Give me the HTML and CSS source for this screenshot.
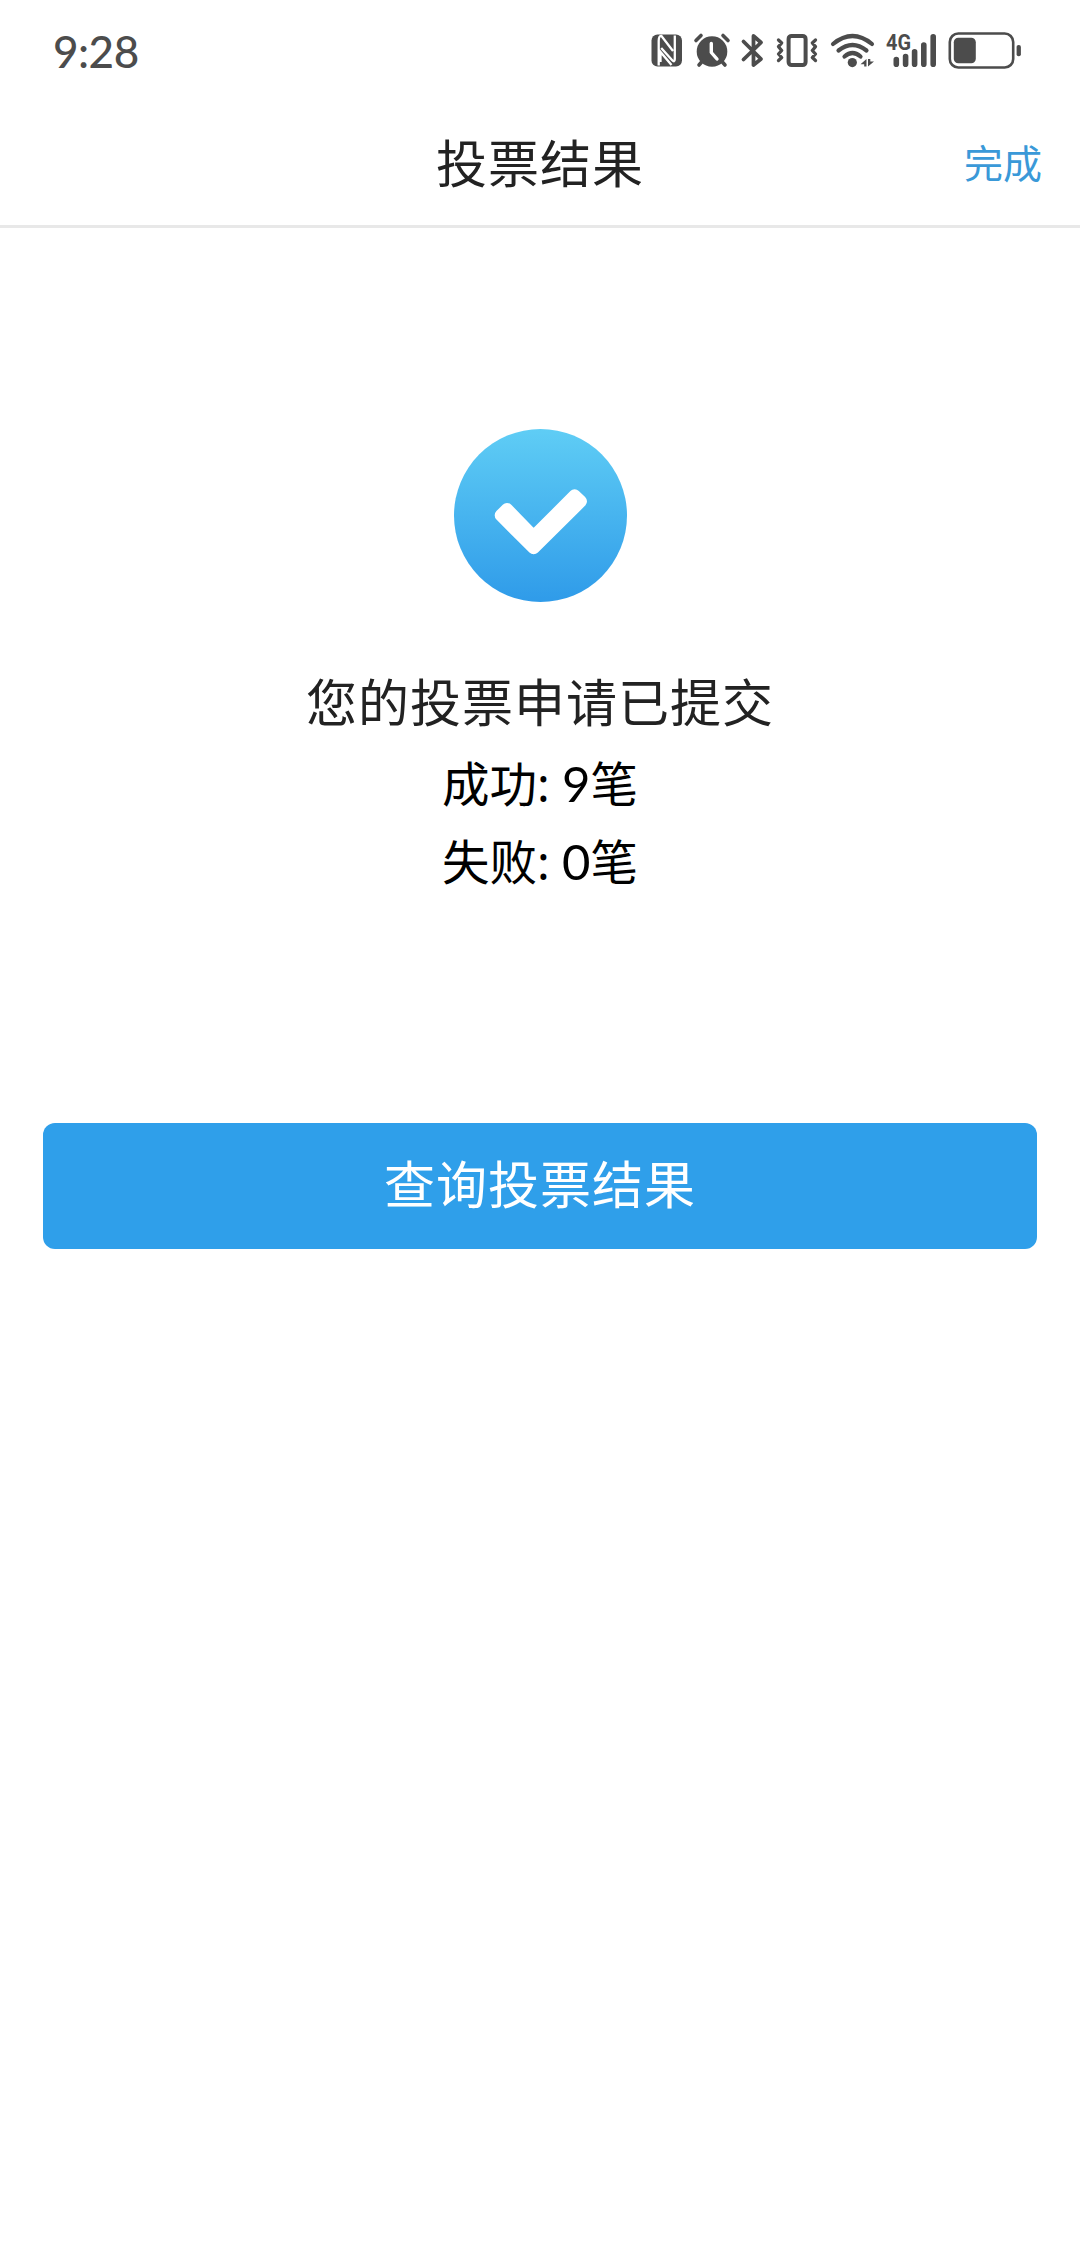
FILE: index.html
```
<!DOCTYPE html>
<html lang="zh-CN">
<head>
<meta charset="UTF-8">
<title>投票结果</title>
<meta name="viewport" content="width=device-width,initial-scale=1">
<link rel="stylesheet" href="styles.css">
</head>
<body>

<!-- Status bar -->
<div class="status-bar">
  <div class="time">9:28</div>
  <div class="status-icons">
    <!-- nfc -->
    <svg class="nfc" width="32" height="44" viewBox="0 0 32 44">
      <rect x="0.5" y="6.5" width="30.5" height="32" rx="6" fill="#4c4c4c"/>
      <path d="M7.7 37.5V13Q7.7 7.5 10.5 8L22 23M10.2 20L21 32Q23.8 35 23.8 31V7.5M9.5 34V24L20.5 37" fill="none" stroke="#fff" stroke-width="2.3"/>
    </svg>
    <!-- alarm -->
    <svg class="alarm" width="36" height="44" viewBox="0 0 36 44">
      <circle cx="18" cy="23.5" r="15.3" fill="#4c4c4c"/>
      <g fill="none" stroke="#4c4c4c" stroke-width="3.6" stroke-linecap="round">
        <path d="M2 12.5L7 7.5M34 12.5L29 7.5M8.5 33L5 37M27.5 33L31 37"/>
      </g>
      <path d="M17.3 15.5V24.5L23 31" fill="none" stroke="#fff" stroke-width="3.4" stroke-linecap="round" stroke-linejoin="round"/>
    </svg>
    <!-- bluetooth -->
    <svg class="bluetooth" width="24" height="44" viewBox="0 0 24 44">
      <path d="M2.5 13.5L20 31L12.5 37V8L20 14.5L2.5 31.5" fill="none" stroke="#4c4c4c" stroke-width="3.8" stroke-linecap="round" stroke-linejoin="round"/>
    </svg>
    <!-- vibrate -->
    <svg class="vibrate" width="42" height="44" viewBox="0 0 42 44">
      <g fill="none" stroke="#4c4c4c" stroke-linecap="round" stroke-linejoin="round">
        <rect x="12.6" y="7.9" width="17" height="29.2" rx="3" stroke-width="4"/>
        <path d="M2.5 12L5.7 15L2.5 18.7L5.7 22.5L2.5 26L5.7 29.5L2.5 32.5M39.5 12L36.3 15L39.5 18.7L36.3 22.5L39.5 26L36.3 29.5L39.5 32.5" stroke-width="3.3"/>
      </g>
    </svg>
    <!-- wifi -->
    <svg class="wifi" width="46" height="44" viewBox="0 0 46 44">
      <g fill="none" stroke="#4c4c4c" stroke-width="4.2" stroke-linecap="round">
        <path d="M3 16Q22.5 0 42 16M8.5 22.5Q22.5 11.5 36.5 22.5M14.5 28.5Q22.5 21.5 30.5 28.5"/>
      </g>
      <circle cx="22.3" cy="34.6" r="4.6" fill="#4c4c4c"/>
      <path d="M36.5 31V38.5H34.2V36.3H30.5ZM38 38.5V31H40.3V33.4H44Z" fill="#4c4c4c"/>
    </svg>
    <!-- mobile signal -->
    <svg class="signal" width="52" height="44" viewBox="0 0 52 44">
      <text class="net-type" x="0" y="22.3" textLength="25" lengthAdjust="spacingAndGlyphs">4G</text>
      <path d="M10.3 31.5V36.2M19.6 28.5V36.2M28.6 23.7V36.2M37.8 17V36.2M47.2 8.7V36.2" fill="none" stroke="#4c4c4c" stroke-width="5.6" stroke-linecap="round"/>
    </svg>
    <!-- battery -->
    <svg class="battery" width="74" height="44" viewBox="0 0 74 44">
      <rect x="1.8" y="5.5" width="63.4" height="34" rx="8.5" fill="none" stroke="#4c4c4c" stroke-width="2.6"/>
      <rect x="5.8" y="9.8" width="22" height="25.4" rx="4.5" fill="#4c4c4c"/>
      <rect x="68.6" y="17" width="4.3" height="11.2" rx="2" fill="#4c4c4c"/>
    </svg>
  </div>
</div>

<!-- Header -->
<div class="header">
  <div class="side"></div>
  <div class="title">投票结果</div>
  <a class="side done">完成</a>
</div>

<!-- Result -->
<div class="result">
  <svg class="check" width="173" height="173" viewBox="0 0 519 519">
    <defs>
      <linearGradient id="blue" x1="0" y1="0" x2="0" y2="1">
        <stop offset="0" stop-color="#5fcdf5"/>
        <stop offset="1" stop-color="#2f9be9"/>
      </linearGradient>
    </defs>
    <circle cx="259.5" cy="259.5" r="259.5" fill="url(#blue)"/>
    <path d="M140 259L159 240L239 322L362 199L381 217L239 358Z" fill="#fff" stroke="#fff" stroke-width="36" stroke-linejoin="round"/>
  </svg>
  <div class="message">您的投票申请已提交</div>
  <div class="count">成功: <span class="num">9</span>笔</div>
  <div class="count">失败: <span class="num">0</span>笔</div>
</div>

<button class="query-btn">查询投票结果</button>

</body>
</html>
```

FILE: styles.css
```
:root{
  --blue:#2f9fea;
  --text:#222;
  --status:#4c4c4c;
}
*{box-sizing:border-box;}
body{
  margin:0; min-height:100vh; background:#fff; color:var(--text);
  font-family:"Noto Sans","Noto Sans CJK SC",sans-serif;
  display:flex; flex-direction:column;
}

/* status bar */
.status-bar{
  height:100px; padding:0 58px 0 53px;
  display:flex; align-items:center; justify-content:space-between;
}
.time{
  font-family:Lato,"Noto Sans",sans-serif; font-size:44px; line-height:60px; font-weight:500; letter-spacing:-0.5px;
  padding-top:2px; color:var(--status);
}
.status-icons{display:flex; align-items:center;}
.status-icons svg{display:block; overflow:visible;}
.alarm{margin-left:11px;}
.bluetooth{margin-left:11px;}
.vibrate{margin-left:11px;}
.wifi{margin-left:12px;}
.signal{margin-left:10px;}
.battery{margin-left:10px;}
.net-type{
  font-family:Roboto,sans-serif; font-size:22px; font-weight:700; fill:var(--status);
}

/* header */
.header{
  height:128px; padding:0 38px; border-bottom:3px solid #e8e8e8;
  display:flex; align-items:center; justify-content:space-between;
}
.title{font-size:51px; line-height:76px; letter-spacing:1px;}
.side{width:120px;}
.done{
  font-size:39px; line-height:60px; text-align:right; color:#3a99d8;
}

/* result */
.result{
  padding-top:201px;
  display:flex; flex-direction:column; align-items:center;
}
.check{display:block;}
.message{margin-top:61px; font-size:51px; line-height:78px; letter-spacing:1px;}
.count{font-size:47.5px; line-height:78px; color:#000;}
.message + .count{margin-top:4px;}
.num{font-family:Lato,"Noto Sans",sans-serif; font-size:49px; line-height:1;}

.query-btn{
  margin:222px 43px 0; height:126px; padding:0 0 4px;
  border:none; border-radius:12px; background:var(--blue); color:#fff;
  font-family:inherit; font-size:51px; line-height:76px; letter-spacing:1px; cursor:pointer;
}
```
